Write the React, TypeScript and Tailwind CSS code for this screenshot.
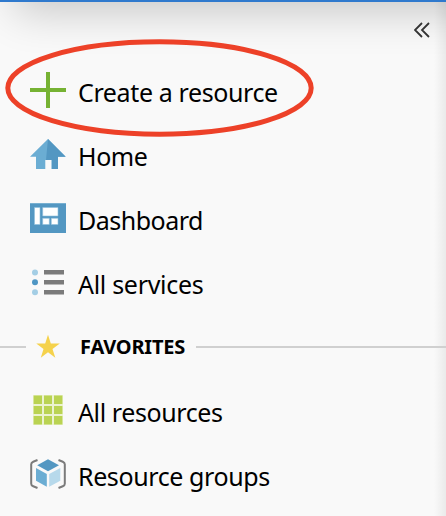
import type { ReactNode } from "react";

function Icon({ children }: { children: ReactNode }) {
  return (
    <svg viewBox="0 0 36 36" className="size-9 shrink-0" aria-hidden="true">
      {children}
    </svg>
  );
}

const plus = <path d="M18 0V36M0 18H36" stroke="#76b233" strokeWidth="4" />;

const home = (
  <>
    <path d="M18 3 0 20.8H6V33H15.3V24H21.7V33H28V20.8H35.7Z" fill="#6badd3" />
    <path d="M18 3 16 24H21.7V33H28V20.8H35.7Z" fill="#5397c2" />
  </>
);

const dashboard = (
  <>
    <path d="M0 3H36V33H0Z" fill="#5397c2" />
    <path d="M0 3H36V4H0Z" fill="#78b0d1" />
    <path
      d="M4.5 7.5H10V24.5H4.5ZM12.7 7.5H28V16H12.7ZM12.7 18.3H19.3V24.5H12.7ZM21.3 18.3H28V24.5H21.3Z"
      fill="#fff"
      stroke="#8fc0dc"
      strokeWidth=".6"
    />
  </>
);

const services = (
  <>
    <circle cx="5" cy="8.5" r="3" fill="#a4cee5" />
    <circle cx="5" cy="18.3" r="3" fill="#4f96c4" />
    <circle cx="5" cy="28.2" r="3" fill="#a4cee5" />
    <path d="M14 6H34V10.4H14ZM14 16H34V20.4H14ZM14 26H34V30.4H14Z" fill="#7b7b7b" />
  </>
);

const star = (
  <path
    d="M18 6.8 20.8 15.5H29.8L22.5 20.9 25.3 29.7 18 24.3 10.8 29.7 13.5 20.9 6.3 15.5H15.2Z"
    fill="#f5d24c"
  />
);

const grid = (
  <>
    <path d="M3 3H33V33H3Z" fill="#ecf3d0" />
    <path
      d="M3.6 3.6H12V12H3.6ZM14 3.6H22V12H14ZM24 3.6H32.4V12H24ZM3.6 14H12V22H3.6ZM14 14H22V22H14ZM24 14H32.4V22H24ZM3.6 24H12V32.4H3.6ZM14 24H22V32.4H14ZM24 24H32.4V32.4H24Z"
      fill="#bad352"
    />
  </>
);

const group = (
  <>
    <path
      d="M7.5 4 3.2 5.7Q1.2 6.5 1.2 8.3V27.7Q1.2 29.5 3.2 30.3L7.5 32M28.5 4 32.8 5.7Q34.8 6.5 34.8 8.3V27.7Q34.8 29.5 32.8 30.3L28.5 32"
      fill="none"
      stroke="#7b7b7b"
      strokeWidth="2"
    />
    <path d="M18 3.3 29 9.3 18 15.3 7.2 9.3Z" fill="#5397c2" />
    <path d="M6 12 16.8 18V30.7L6 24.7Z" fill="#6badd3" />
    <path d="M19.2 18 30.3 12V24.7L19.2 30.7Z" fill="#b7d9eb" />
  </>
);

function NavItem({ icon, label, tracking }: { icon: ReactNode; label: string; tracking: string }) {
  return (
    <li className="flex h-16 items-center pl-[30px]">
      <Icon>{icon}</Icon>
      <span className={`ml-3 pt-1 text-[25px] leading-9 whitespace-nowrap ${tracking}`}>{label}</span>
    </li>
  );
}

export default function App() {
  return (
    <nav className="relative h-[516px] w-[446px] overflow-hidden bg-[#f9f9f9] font-['Noto_Sans','Open_Sans',sans-serif] text-black">
      <div className="absolute top-[-88px] left-[14px] h-[90px] w-[480px] shadow-[0_10px_44px_rgba(0,0,0,0.2)]" />
      <div className="absolute inset-y-0 right-0 w-3 bg-linear-to-l from-black/6 to-transparent" />
      <header className="relative flex h-[58px] justify-end border-t-2 border-[#2f79cd] pt-5 pr-4">
        <svg viewBox="0 0 16 16" className="size-4" fill="none" stroke="#333" strokeWidth="1.8" aria-label="Collapse menu">
          <path d="m8 1-7 7 7 7M15 1 8 8l7 7" />
        </svg>
      </header>
      <ul className="relative">
        <NavItem icon={plus} label="Create a resource" tracking="tracking-[-0.38px]" />
        <NavItem icon={home} label="Home" tracking="tracking-[-0.4px]" />
        <NavItem icon={dashboard} label="Dashboard" tracking="tracking-[-0.5px]" />
        <NavItem icon={services} label="All services" tracking="tracking-[-0.3px]" />
        <li className="flex h-16 items-center">
          <span className="mt-0.5 h-0.5 w-[26px] bg-[#d0d0d0]" />
          <span className="ml-1 flex"><Icon>{star}</Icon></span>
          <span className="ml-3.5 w-[106px] pt-0.5 text-[20px] leading-7 font-bold tracking-[-0.2px] whitespace-nowrap">FAVORITES</span>
          <span className="mt-0.5 ml-2.5 h-0.5 flex-1 bg-[#d0d0d0]" />
        </li>
        <NavItem icon={grid} label="All resources" tracking="tracking-[-0.4px]" />
        <NavItem icon={group} label="Resource groups" tracking="tracking-[-0.4px]" />
      </ul>
      <svg viewBox="0 0 446 516" className="pointer-events-none absolute inset-0 h-full w-full" aria-hidden="true">
        <ellipse cx="159.5" cy="88" rx="151.7" ry="46.2" fill="none" stroke="#ed4128" strokeWidth="5" />
      </svg>
    </nav>
  );
}
